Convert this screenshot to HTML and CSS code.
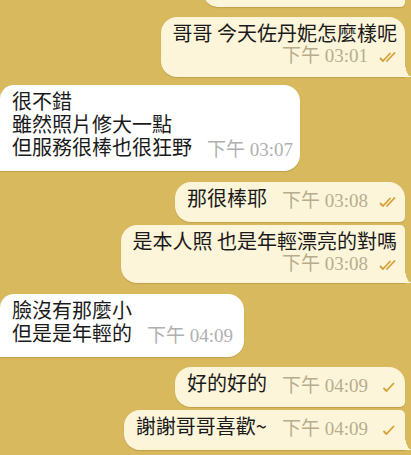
FILE: index.html
```html
<!DOCTYPE html>
<html lang="zh-Hant">
<head>
<meta charset="utf-8">
<link rel="stylesheet" href="styles.css">
</head>
<body>
<div class="chat">
  <div class="msg out partial"></div>

  <div class="msg out tail stack m1">
    <div class="text">哥哥 今天佐丹妮怎麼樣呢</div>
    <div class="meta"><span class="time">下午 03:01</span><svg class="chk" viewBox="0 0 18 12"><path d="M1.5 7.5 L4 10 L11 2.5 M8 10 L15.5 2"/></svg></div>
  </div>

  <div class="msg in inline m2">
    <div class="text">很不錯<br>雖然照片修大一點<br>但服務很棒也很狂野</div>
    <div class="meta"><span class="time">下午 03:07</span></div>
  </div>

  <div class="msg out inline first m3">
    <div class="text">那很棒耶</div>
    <div class="meta"><span class="time">下午 03:08</span><svg class="chk" viewBox="0 0 18 12"><path d="M1.5 7.5 L4 10 L11 2.5 M8 10 L15.5 2"/></svg></div>
  </div>

  <div class="msg out tail stack last m4">
    <div class="text">是本人照 也是年輕漂亮的對嗎</div>
    <div class="meta"><span class="time">下午 03:08</span><svg class="chk" viewBox="0 0 18 12"><path d="M1.5 7.5 L4 10 L11 2.5 M8 10 L15.5 2"/></svg></div>
  </div>

  <div class="msg in inline m5">
    <div class="text">臉沒有那麼小<br>但是是年輕的</div>
    <div class="meta"><span class="time">下午 04:09</span></div>
  </div>

  <div class="msg out inline first m6">
    <div class="text">好的好的</div>
    <div class="meta"><span class="time">下午 04:09</span><svg class="chk single" viewBox="0 0 18 12"><path d="M5 7.5 L7.5 10 L14.5 2.5"/></svg></div>
  </div>

  <div class="msg out inline tail last m7">
    <div class="text">謝謝哥哥喜歡~</div>
    <div class="meta"><span class="time">下午 04:09</span><svg class="chk single" viewBox="0 0 18 12"><path d="M5 7.5 L7.5 10 L14.5 2.5"/></svg></div>
  </div>
</div>
</body>
</html>
```

FILE: styles.css
```css
html, body {
  margin: 0;
  padding: 0;
}
body {
  background: #d9b95d;
  width: 411px;
  height: 455px;
  overflow: hidden;
  font-family: "Noto Sans CJK TC", "Noto Sans", sans-serif;
  color: #1a1a1a;
}
.chat {
  display: flex;
  flex-direction: column;
  padding-right: 6px;
}
.msg {
  position: relative;
  padding: 4px 8px 13px 12px;
  border-radius: 16px;
  box-shadow: 0 1px 1px rgba(120, 90, 20, 0.25);
}
.out {
  align-self: flex-end;
  background: #fdf5d9;
}
.in {
  align-self: flex-start;
  background: #ffffff;
  border-bottom-left-radius: 0;
  border-top-left-radius: 14px;
}
.text {
  font-size: 20px;
  line-height: 23px;
  white-space: nowrap;
}
.inline {
  display: flex;
  align-items: flex-end;
}
.inline .meta {
  margin-left: 15px;
  margin-bottom: -3px;
}
.meta {
  display: flex;
  align-items: center;
  gap: 11px;
  line-height: 23px;
}
.stack .meta {
  justify-content: flex-end;
  height: 23px;
}
.time {
  font-family: "Liberation Serif", "Noto Sans CJK TC", serif;
  font-size: 19px;
  color: #b7ad8e;
  white-space: nowrap;
}
.in .time {
  color: #b0b0b0;
}
.chk {
  width: 18px;
  height: 12px;
  margin-top: 3px;
  fill: none;
  stroke: #d3a137;
  stroke-width: 1.8;
  stroke-linecap: round;
  stroke-linejoin: round;
}
.tail {
  border-bottom-right-radius: 0;
}
.tail::after {
  content: "";
  position: absolute;
  right: -7px;
  bottom: 0;
  width: 7px;
  height: 14px;
  background: radial-gradient(ellipse 7px 14px at 100% 0, transparent 96%, #fdf5d9 100%);
}
.first {
  border-bottom-right-radius: 5px;
}
.last {
  border-top-right-radius: 5px;
}
.partial {
  height: 30px;
  width: 202px;
  padding: 0;
  margin-top: -23px;
  border-bottom-right-radius: 5px;
}
.m1 { margin-top: 10px; padding-bottom: 10px; }
.m2 { margin-top: 8px; padding-right: 7px; }
.m3 { margin-top: 11px; }
.m4 { margin-top: 3px; padding-bottom: 8px; }
.m5 { margin-top: 11px; padding-right: 11px; }
.m6 { margin-top: 10px; }
.m7 { margin-top: 3px; }
```
